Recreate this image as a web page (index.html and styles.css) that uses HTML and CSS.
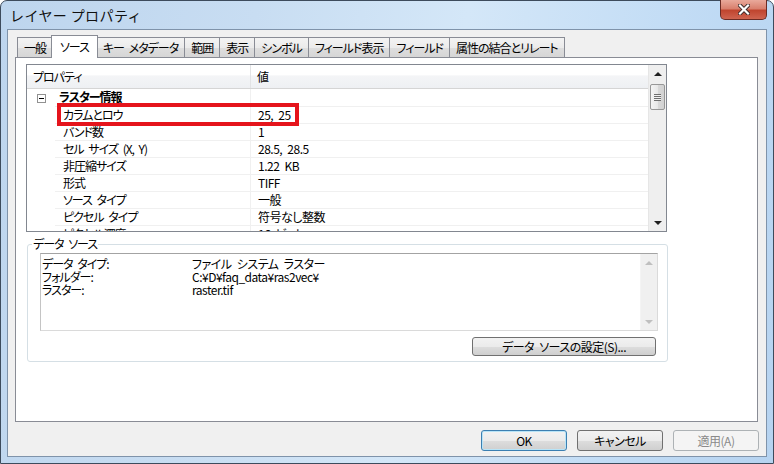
FILE: index.html
```html
<!DOCTYPE html>
<html lang="ja">

<head>
    <meta charset="UTF-8">
    <title>レイヤー プロパティ</title>
    <link rel="stylesheet" href="styles.css">
</head>

<body>
    <div class="window">
        <div class="titlebar">
            <span class="title">レイヤー プロパティ</span>
            <button class="close" title="閉じる">
                <svg width="12" height="11" viewBox="0 0 12 11">
                    <path d="M2 1.5 L10 9.5 M10 1.5 L2 9.5" stroke="#3a2a2a" stroke-width="4" stroke-linecap="square" fill="none"/>
                    <path d="M2 1.5 L10 9.5 M10 1.5 L2 9.5" stroke="#ffffff" stroke-width="2.2" stroke-linecap="square" fill="none"/>
                </svg>
            </button>
        </div>

        <div class="client">
            <div class="tabs">
                <div class="tab">一般</div>
                <div class="tab active">ソース</div>
                <div class="tab">キー メタデータ</div>
                <div class="tab">範囲</div>
                <div class="tab">表示</div>
                <div class="tab">シンボル</div>
                <div class="tab">フィールド表示</div>
                <div class="tab">フィールド</div>
                <div class="tab">属性の結合とリレート</div>
            </div>

            <div class="panel">
                <div class="grid">
                    <div class="grid-body">
                        <div class="grid-head">
                            <div class="gh-name">プロパティ</div>
                            <div class="gh-value">値</div>
                        </div>
                        <div class="row category">
                            <div class="indent"><span class="toggle"></span></div>
                            <div class="name">ラスター情報</div>
                            <div class="value"></div>
                        </div>
                        <div class="row">
                            <div class="indent"></div>
                            <div class="name">カラムとロウ</div>
                            <div class="value">25, 25</div>
                        </div>
                        <div class="row">
                            <div class="indent"></div>
                            <div class="name">バンド数</div>
                            <div class="value">1</div>
                        </div>
                        <div class="row">
                            <div class="indent"></div>
                            <div class="name">セル サイズ (X, Y)</div>
                            <div class="value">28.5, 28.5</div>
                        </div>
                        <div class="row">
                            <div class="indent"></div>
                            <div class="name">非圧縮サイズ</div>
                            <div class="value">1.22 KB</div>
                        </div>
                        <div class="row">
                            <div class="indent"></div>
                            <div class="name">形式</div>
                            <div class="value">TIFF</div>
                        </div>
                        <div class="row">
                            <div class="indent"></div>
                            <div class="name">ソース タイプ</div>
                            <div class="value">一般</div>
                        </div>
                        <div class="row">
                            <div class="indent"></div>
                            <div class="name">ピクセル タイプ</div>
                            <div class="value">符号なし整数</div>
                        </div>
                        <div class="row">
                            <div class="indent"></div>
                            <div class="name">ピクセル深度</div>
                            <div class="value">16 ビット</div>
                        </div>
                    </div>
                    <div class="vscroll">
                        <div class="sb-btn"><span class="arrow up"></span></div>
                        <div class="sb-track">
                            <div class="thumb"><span class="grip"></span></div>
                        </div>
                        <div class="sb-btn"><span class="arrow down"></span></div>
                    </div>
                    <div class="highlight"></div>
                </div>

                <fieldset class="group">
                    <legend>データ ソース</legend>
                    <div class="list">
                        <div class="list-body">
                            <div class="list-row"><span>データ タイプ:</span><span>ファイル システム ラスター</span></div>
                            <div class="list-row"><span>フォルダー:</span><span>C:¥D¥faq_data¥ras2vec¥</span></div>
                            <div class="list-row"><span>ラスター:</span><span>raster.tif</span></div>
                        </div>
                        <div class="vscroll off">
                            <div class="sb-btn"><span class="arrow up"></span></div>
                            <div class="sb-track"></div>
                            <div class="sb-btn"><span class="arrow down"></span></div>
                        </div>
                    </div>
                    <div class="group-actions">
                        <button class="btn wide">データ ソースの設定(S)...</button>
                    </div>
                </fieldset>
            </div>

            <div class="footer">
                <button class="btn default">OK</button>
                <button class="btn">キャンセル</button>
                <button class="btn" disabled>適用(A)</button>
            </div>
        </div>
    </div>
</body>

</html>
```

FILE: styles.css
```css
* {
    box-sizing: border-box;
}

body {
    margin: 0;
    background: #fff;
    color: #000;
    font-family: "Noto Sans CJK JP", "Noto Sans", sans-serif;
    font-size: 12px;
    font-feature-settings: "palt";
    letter-spacing: -0.5px;
    word-spacing: 3px;
}

.window {
    width: 774px;
    height: 464px;
    display: flex;
    flex-direction: column;
    padding: 0 6px 6px;
    border: 1px solid #3d4b5c;
    border-radius: 7px 7px 0 0;
    background: linear-gradient(100deg, #bdd5ee 0%, #c8ddf2 30%, #d4e7f8 55%, #c2dcf5 80%, #b6d3f0 100%);
}

.titlebar {
    height: 28px;
    flex: none;
    display: flex;
    justify-content: space-between;
    align-items: center;
}

.title {
    padding-left: 3px;
    font-size: 14px;
    font-feature-settings: normal;
    letter-spacing: 0.4px;
    word-spacing: 0;
    color: #101010;
}

.close {
    align-self: flex-start;
    width: 47px;
    height: 20px;
    margin-top: -1px;
    padding: 0;
    display: flex;
    align-items: center;
    justify-content: center;
    border: 1px solid #6b2b24;
    border-top: none;
    border-radius: 0 0 5px 5px;
    background: linear-gradient(#e9a99b 0%, #d9806e 45%, #c0452f 55%, #cf6450 100%);
}

.client {
    flex: 1;
    display: flex;
    flex-direction: column;
    padding: 5px 8px 0 7px;
    border: 1px solid #7f93aa;
    background: #f0f0f0;
}

/* tabs */

.tabs {
    height: 22px;
    flex: none;
    display: flex;
    align-items: flex-end;
    padding-left: 2px;
    position: relative;
    z-index: 1;
}

.tab {
    height: 20px;
    padding: 0 6px;
    margin-right: -1px;
    line-height: 19px;
    letter-spacing: -1px;
    white-space: nowrap;
    border: 1px solid #898c95;
    border-bottom: none;
    background: linear-gradient(#f3f3f3 0%, #ebebeb 50%, #dedede 51%, #d6d6d6 100%);
}

.tab.active {
    height: 23px;
    margin: 0 -2px -1px -1px;
    padding: 0 8px;
    line-height: 21px;
    background: #fff;
    position: relative;
    z-index: 2;
}

.panel {
    height: 365px;
    flex: none;
    padding: 6px 0 0 10px;
    border: 1px solid #898c95;
    background: #fff;
}

/* property grid */

.grid {
    position: relative;
    width: 641px;
    height: 168px;
    display: flex;
    border: 1px solid #828790;
}

.grid-body {
    flex: 1;
    overflow: hidden;
}

.grid-head {
    height: 24px;
    display: flex;
    border-bottom: 1px solid #d5d5d5;
    background: linear-gradient(#ffffff 0%, #ffffff 45%, #f4f5f7 46%, #eef0f3 100%);
}

.gh-name {
    width: 224px;
    padding: 3px 0 0 6px;
    letter-spacing: -1px;
    border-right: 1px solid #e2e3e5;
}

.gh-value {
    flex: 1;
    padding: 3px 0 0 6px;
}

.row {
    height: 17px;
    display: flex;
    line-height: 16px;
    white-space: nowrap;
}

.row.category {
    height: 18px;
    font-weight: bold;
}

.indent {
    width: 28px;
    flex: none;
    display: flex;
    align-items: center;
    padding-left: 10px;
}

.toggle {
    width: 9px;
    height: 9px;
    position: relative;
    border: 1px solid #919191;
    background: #fff;
}

.toggle::after {
    content: "";
    position: absolute;
    left: 1px;
    top: 3px;
    width: 5px;
    height: 1px;
    background: #000;
}

.name {
    width: 196px;
    flex: none;
    padding-left: 8px;
    letter-spacing: -1px;
    border-right: 1px solid #f0f0f0;
    border-bottom: 1px solid #f0f0f0;
}

.category .name {
    padding-left: 4px;
}

.value {
    flex: 1;
    padding-left: 7px;
    border-bottom: 1px solid #f0f0f0;
}

.highlight {
    position: absolute;
    left: 30px;
    top: 38px;
    width: 242px;
    height: 23px;
    border: 4px solid #e5141c;
}

/* scrollbars */

.vscroll {
    width: 18px;
    flex: none;
    display: flex;
    flex-direction: column;
    border-left: 1px solid #e6e6e6;
    background: #efefef;
}

.sb-btn {
    height: 17px;
    flex: none;
    display: flex;
    align-items: center;
    justify-content: center;
}

.sb-track {
    flex: 1;
}

.arrow {
    width: 0;
    height: 0;
    border-left: 4px solid transparent;
    border-right: 4px solid transparent;
}

.arrow.up {
    border-bottom: 4px solid #202020;
}

.arrow.down {
    border-top: 4px solid #202020;
}

.vscroll.off .arrow.up {
    border-bottom-color: #bfbfbf;
}

.vscroll.off .arrow.down {
    border-top-color: #bfbfbf;
}

.thumb {
    width: 15px;
    height: 26px;
    margin: 2px 0 0 1px;
    display: flex;
    align-items: center;
    justify-content: center;
    border: 1px solid #979797;
    border-radius: 2px;
    background: linear-gradient(90deg, #f4f4f4 0%, #e8e8e8 50%, #d9d9d9 51%, #d2d2d2 100%);
}

.grip {
    width: 7px;
    height: 7px;
    background: repeating-linear-gradient(#6e6e6e 0, #6e6e6e 1px, #f0f0f0 1px, #f0f0f0 2px);
}

/* data source group */

.group {
    width: 641px;
    margin: 5px 0 0 1px;
    padding: 2px 9px 5px 12px;
    border: 1px solid #d5dfe5;
    border-radius: 3px;
}

.group legend {
    margin-left: -8px;
    padding: 0 1px;
    line-height: 14px;
    letter-spacing: -1px;
}

.list {
    height: 78px;
    display: flex;
    border: 1px solid;
    border-color: #a3a3a3 #dadada #dadada #c4c4c4;
    background: #fff;
}

.list-body {
    flex: 1;
    padding: 3px 0 0 1px;
}

.list-row {
    display: grid;
    grid-template-columns: 150px 1fr;
    line-height: 13px;
}

.list-row span:first-child {
    letter-spacing: -1px;
}

.vscroll.off {
    width: 17px;
    border-left: 1px solid #f4f4f4;
    background: #f0f0f0;
}

.group-actions {
    display: flex;
    justify-content: flex-end;
    padding: 6px 2px 0 0;
}

/* buttons */

.btn {
    width: 86px;
    height: 21px;
    padding: 0;
    font: inherit;
    line-height: 19px;
    letter-spacing: inherit;
    word-spacing: inherit;
    color: #000;
    border: 1px solid #707070;
    border-radius: 3px;
    background: linear-gradient(#f2f2f2 0%, #ebebeb 50%, #dddddd 51%, #cfcfcf 100%);
}

.btn.wide {
    width: 184px;
    height: 19px;
    line-height: 17px;
}

.btn.default {
    border-color: #3c7fb1;
    box-shadow: inset 0 0 0 1px #b8e4f7;
}

.btn:disabled {
    color: #8a8a8a;
    border-color: #adb2b5;
    background: #f4f4f4;
}

.footer {
    display: flex;
    justify-content: flex-end;
    gap: 10px;
    padding-top: 8px;
    margin-right: -1px;
}
```
